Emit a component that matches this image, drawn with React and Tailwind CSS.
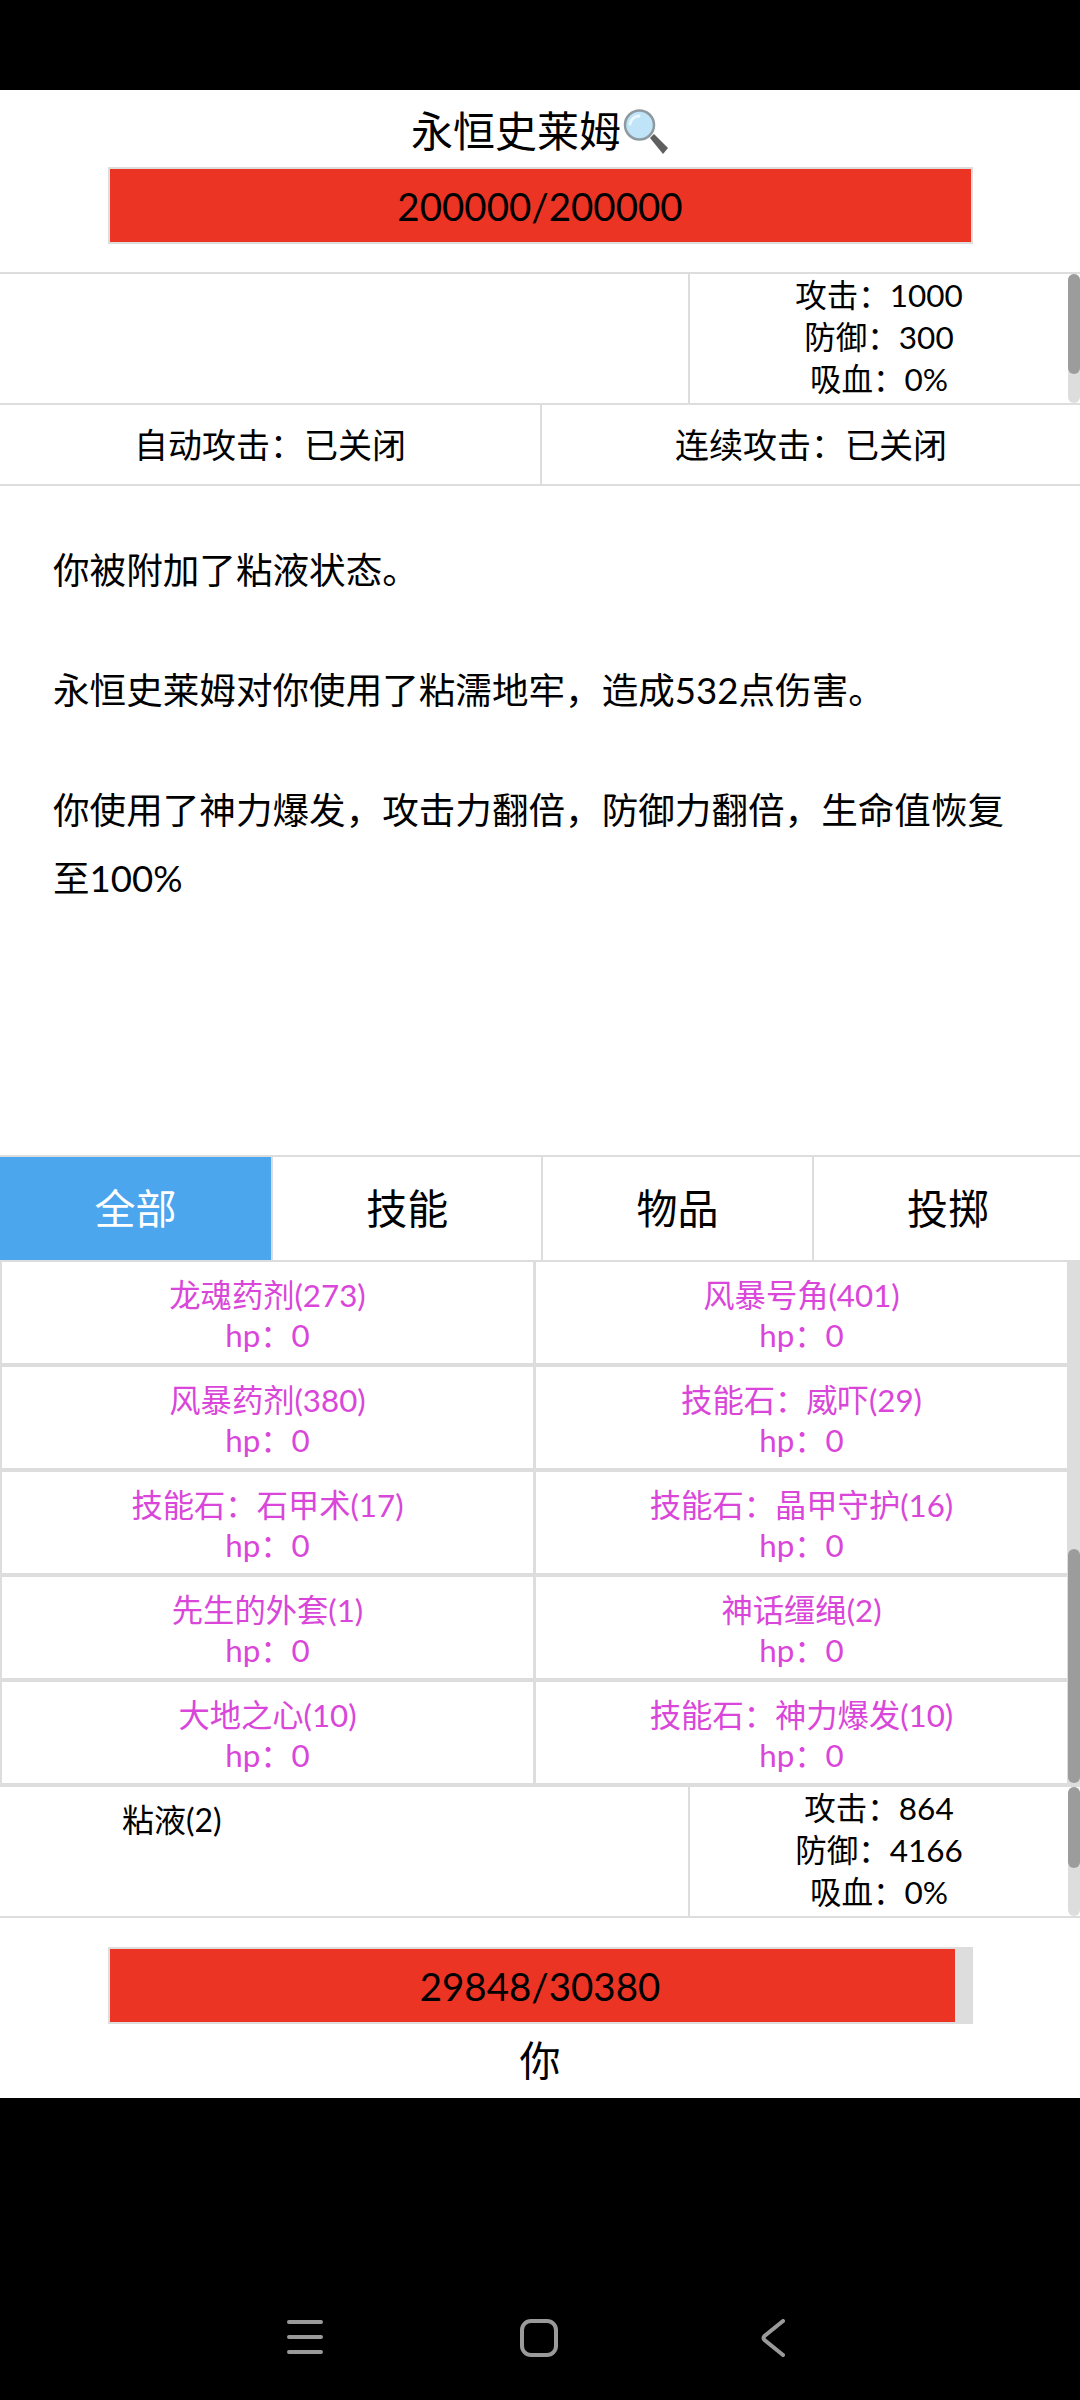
const items = [
  "龙魂药剂(273)",
  "风暴号角(401)",
  "风暴药剂(380)",
  "技能石：威吓(29)",
  "技能石：石甲术(17)",
  "技能石：晶甲守护(16)",
  "先生的外套(1)",
  "神话缰绳(2)",
  "大地之心(10)",
  "技能石：神力爆发(10)",
];

const tabs = ["全部", "技能", "物品", "投掷"];

const HpBar = ({ current, max }) => (
  <div className="mx-auto grid h-[77px] w-[865px] border-2 border-[#dddddd] bg-[#dddddd]">
    <div
      className="col-start-1 row-start-1 bg-[#ec3424]"
      style={{ width: `${(current / max) * 100}%` }}
    />
    <div className="col-start-1 row-start-1 flex items-center justify-center pt-[2px] text-[38.5px] text-black">
      {current}/{max}
    </div>
  </div>
);

const ScrollTrack = ({ thumbTop, thumbHeight }) => (
  <div className="w-[12px] shrink-0 rounded-[6px] bg-[#dddddd]">
    <div
      className="rounded-[6px] bg-[#9c9c9c]"
      style={{ marginTop: thumbTop, height: thumbHeight }}
    />
  </div>
);

const Stats = ({ attack, defense, leech, children, height, thumbHeight }) => (
  <div className="flex border-b-2 border-[#dddddd]" style={{ height }}>
    <div className="w-[690px] shrink-0 border-r-2 border-[#dddddd] pl-[122px] pt-[12px] text-[32px] leading-[42px]">
      {children}
    </div>
    <div className="flex-1 text-center text-[31.5px] leading-[42px]">
      <div>攻击：{attack}</div>
      <div>防御：{defense}</div>
      <div>吸血：{leech}</div>
    </div>
    <ScrollTrack thumbTop={0} thumbHeight={thumbHeight} />
  </div>
);

const App = () => {
  return (
    <div className="flex h-[2400px] w-[1080px] flex-col overflow-hidden bg-black font-['Lato','Noto_Sans_CJK_SC',sans-serif] text-black">
      <div className="h-[90px] shrink-0" />

      <div className="h-[2008px] shrink-0 bg-white">
        <div className="h-[184px] border-b-2 border-[#dddddd]">
          <div className="flex h-[77px] items-center justify-center pt-[4px] text-[42px] leading-none">
            永恒史莱姆
            <svg width="46" height="46" viewBox="0 0 46 46" className="ml-[2px] mt-[2px] shrink-0">
              <path d="M27 29l4-4 14 14-5 6z" fill="#5f5f5f" />
              <circle cx="16.5" cy="16" r="14.5" fill="#bfe3f7" stroke="#8f9aa0" strokeWidth="2.5" />
              <path d="M7 15a10 10 0 0 1 9-8" fill="none" stroke="#eaf7fe" strokeWidth="3" strokeLinecap="round" />
            </svg>
          </div>
          <HpBar current={200000} max={200000} />
        </div>

        <Stats attack={1000} defense={300} leech="0%" height={131} thumbHeight={100} />

        <div className="flex h-[81px] border-b-2 border-[#dddddd] text-[34px]">
          <div className="flex w-[542px] items-center justify-center border-r-2 border-[#dddddd]">
            自动攻击：已关闭
          </div>
          <div className="flex flex-1 items-center justify-center">连续攻击：已关闭</div>
        </div>

        <div className="h-[671px] border-b-2 border-[#dddddd] pl-[53px] pr-[54px] pt-[50px] text-[36.6px] leading-[68px]">
          <p>你被附加了粘液状态。</p>
          <p className="mt-[52px]">永恒史莱姆对你使用了粘濡地牢，造成532点伤害。</p>
          <p className="mt-[52px]">你使用了神力爆发，攻击力翻倍，防御力翻倍，生命值恢复至100%</p>
        </div>

        <div className="flex h-[105px] overflow-hidden border-b-2 border-[#dddddd] text-[41px]">
          {tabs.map((tab, i) => (
            <div
              key={tab}
              className={
                i === 0
                  ? "flex w-[271px] shrink-0 items-center justify-center bg-[#4ba6ee] text-white"
                  : "flex w-[270.4px] shrink-0 items-center justify-center border-l-2 border-[#dddddd]"
              }
            >
              {tab}
            </div>
          ))}
        </div>

        <div className="flex h-[525px] bg-[#dddddd]">
          <div className="grid flex-1 grid-cols-2 content-start gap-x-[3px] gap-y-[4px] pl-[2px] pr-[1px]">
            {items.map((item) => (
              <div
                key={item}
                className="h-[101px] bg-white pt-[13px] text-center text-[31.3px] leading-[40px] text-[#d946d9]"
              >
                <div>{item}</div>
                <div>hp：0</div>
              </div>
            ))}
          </div>
          <ScrollTrack thumbTop={287} thumbHeight={234} />
        </div>

        <Stats attack={864} defense={4166} leech="0%" height={131} thumbHeight={81}>
          粘液(2)
        </Stats>

        <div className="pt-[29px]">
          <HpBar current={29848} max={30380} />
          <div className="mt-[12px] text-center text-[41px] leading-[50px]">你</div>
        </div>
      </div>

      <div className="flex flex-1 items-start pl-[287px] pt-[221px]">
        <svg width="36" height="34" viewBox="0 0 36 34" className="mt-[1px]">
          <path d="M2 2h32M2 17h32M2 32h32" stroke="#9a9a9a" strokeWidth="4" strokeLinecap="round" />
        </svg>
        <svg width="38" height="38" viewBox="0 0 38 38" className="ml-[197px]">
          <rect x="2" y="2" width="34" height="34" rx="9" fill="none" stroke="#9a9a9a" strokeWidth="4" />
        </svg>
        <svg width="24" height="38" viewBox="0 0 24 38" className="ml-[203px]">
          <path d="M22 2 3.5 17q-2 2 0 4L22 36" fill="none" stroke="#9a9a9a" strokeWidth="4" strokeLinecap="round" />
        </svg>
      </div>
    </div>
  );
};

export default App;
